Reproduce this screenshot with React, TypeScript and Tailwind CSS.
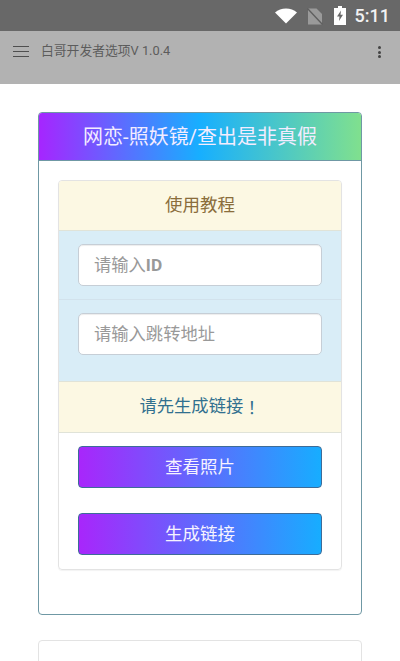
const cjk = "font-['Roboto','Noto_Sans_CJK_SC',sans-serif] [text-spacing-trim:space-all]";

function StatusBar() {
  return (
    <div className="h-[31px] bg-[#686868] flex items-center justify-end pr-[10px] shrink-0">
      {/* wifi */}
      <svg width="22" height="16" viewBox="0 0 22 16" className="mr-[10px] mt-[1px]">
        <path d="M0 4.5C3 2 6.8 0.5 11 0.5S19 2 22 4.5L11 15.5Z" fill="#fff" />
      </svg>
      {/* sim card, no signal */}
      <svg width="16" height="17" viewBox="0 0 16 17" className="mr-[11px] mt-[1px]">
        <path d="M1 0.5H9.5L15 6V16.5H1Z" fill="#9a9a9a" />
        <path d="M0.5 0.5L15.5 16.5" stroke="#5f5f5f" strokeWidth="1.4" />
      </svg>
      {/* battery charging */}
      <svg width="12" height="19" viewBox="0 0 12 19" className="mr-[9px] mb-[1px]">
        <path d="M4 0H8V2H12V19H0V2H4Z" fill="#fff" />
        <path d="M7 4.5L3 10.5H5.5L5 15L9 8.8H6.5Z" fill="#686868" />
      </svg>
      <span className="text-[18px] leading-none font-medium text-[#f2f2f2]">5:11</span>
    </div>
  );
}

function Toolbar() {
  return (
    <div className="h-[53px] bg-[#b2b2b2] flex items-start shrink-0">
      <svg width="16" height="11" viewBox="0 0 16 11" className="ml-[13px] mt-[15px]">
        <path d="M0 .5H16M0 5.5H16M0 10.5H16" stroke="#4f4f4f" strokeWidth="1" />
      </svg>
      <span className="ml-[12px] mt-[11px] text-[12.8px] leading-[18px] text-[#5c5c5c]">
        白哥开发者选项V 1.0.4
      </span>
      <div className="ml-auto mr-[19px] mt-[15px] flex flex-col gap-[1.5px]">
        <div className="w-[3px] h-[3px] rounded-full bg-[#444444]" />
        <div className="w-[3px] h-[3px] rounded-full bg-[#444444]" />
        <div className="w-[3px] h-[3px] rounded-full bg-[#444444]" />
      </div>
    </div>
  );
}

function TextField({ children }: { children: React.ReactNode }) {
  return (
    <div className="h-[42px] bg-white border border-[#c6ced6] rounded-[5px] pl-[15px] pt-[1px] flex items-center text-[17.3px] text-[#999999] shadow-[inset_0_1px_1px_rgba(0,0,0,0.075)]">
      {children}
    </div>
  );
}

function GradientButton({ label }: { label: string }) {
  return (
    <button className="h-[42px] w-full rounded-[4px] border border-[#3d6c98] bg-[linear-gradient(90deg,#a826fb,#17adff)] text-[17.5px] text-[#f6f3ff]">
      {label}
    </button>
  );
}

export default function App() {
  return (
    <div className={`${cjk} w-[400px] h-[661px] overflow-hidden bg-white flex flex-col`}>
      <StatusBar />
      <Toolbar />

      <div className="px-[38px] pt-7 flex flex-col gap-[25px]">
        {/* main card */}
        <div className="h-[503px] shrink-0 rounded-[4px] border border-[#6f98a4] overflow-hidden">
          <div className="h-[48px] border-b border-[#6f98a4] bg-[linear-gradient(90deg,#a625ff_0%,#17afff_50%,#80e08e_100%)] flex items-center justify-center text-[20px] text-[#f3ecff]">
            网恋-照妖镜/查出是非真假
          </div>

          <div className="px-[19px] pt-[19px]">
            <div className="h-[390px] rounded-[4px] border border-[#e3e3e3] overflow-hidden shadow-[0_1px_1px_rgba(0,0,0,0.05)]">
              <div className="h-[50px] bg-[#fcf8e3] border-b border-[#e0e3d8] flex items-center justify-center text-[17.5px] text-[#8a6d3b]">
                使用教程
              </div>

              <div className="h-[150px] bg-[#d9edf7]">
                <div className="h-[69px] px-[19px] pt-[13px] border-b border-[#d2e2ec]">
                  <TextField>
                    请输入<b className="font-bold">ID</b>
                  </TextField>
                </div>
                <div className="px-[19px] pt-[13px]">
                  <TextField>请输入跳转地址</TextField>
                </div>
              </div>

              <div className="h-[52px] bg-[#fcf8e3] border-y border-[#e0e3d8] flex items-center justify-center text-[17.3px] text-[#31708f]">
                请先生成链接<span className="font-['Noto_Sans_CJK_TC',sans-serif]">！</span>
              </div>

              <div className="px-[19px] pt-[13px] flex flex-col gap-[25px]">
                <GradientButton label="查看照片" />
                <GradientButton label="生成链接" />
              </div>
            </div>
          </div>
        </div>

        {/* next card, cut off by the window */}
        <div className="h-[60px] shrink-0 rounded-[4px] border border-[#e3e3e3]" />
      </div>
    </div>
  );
}
